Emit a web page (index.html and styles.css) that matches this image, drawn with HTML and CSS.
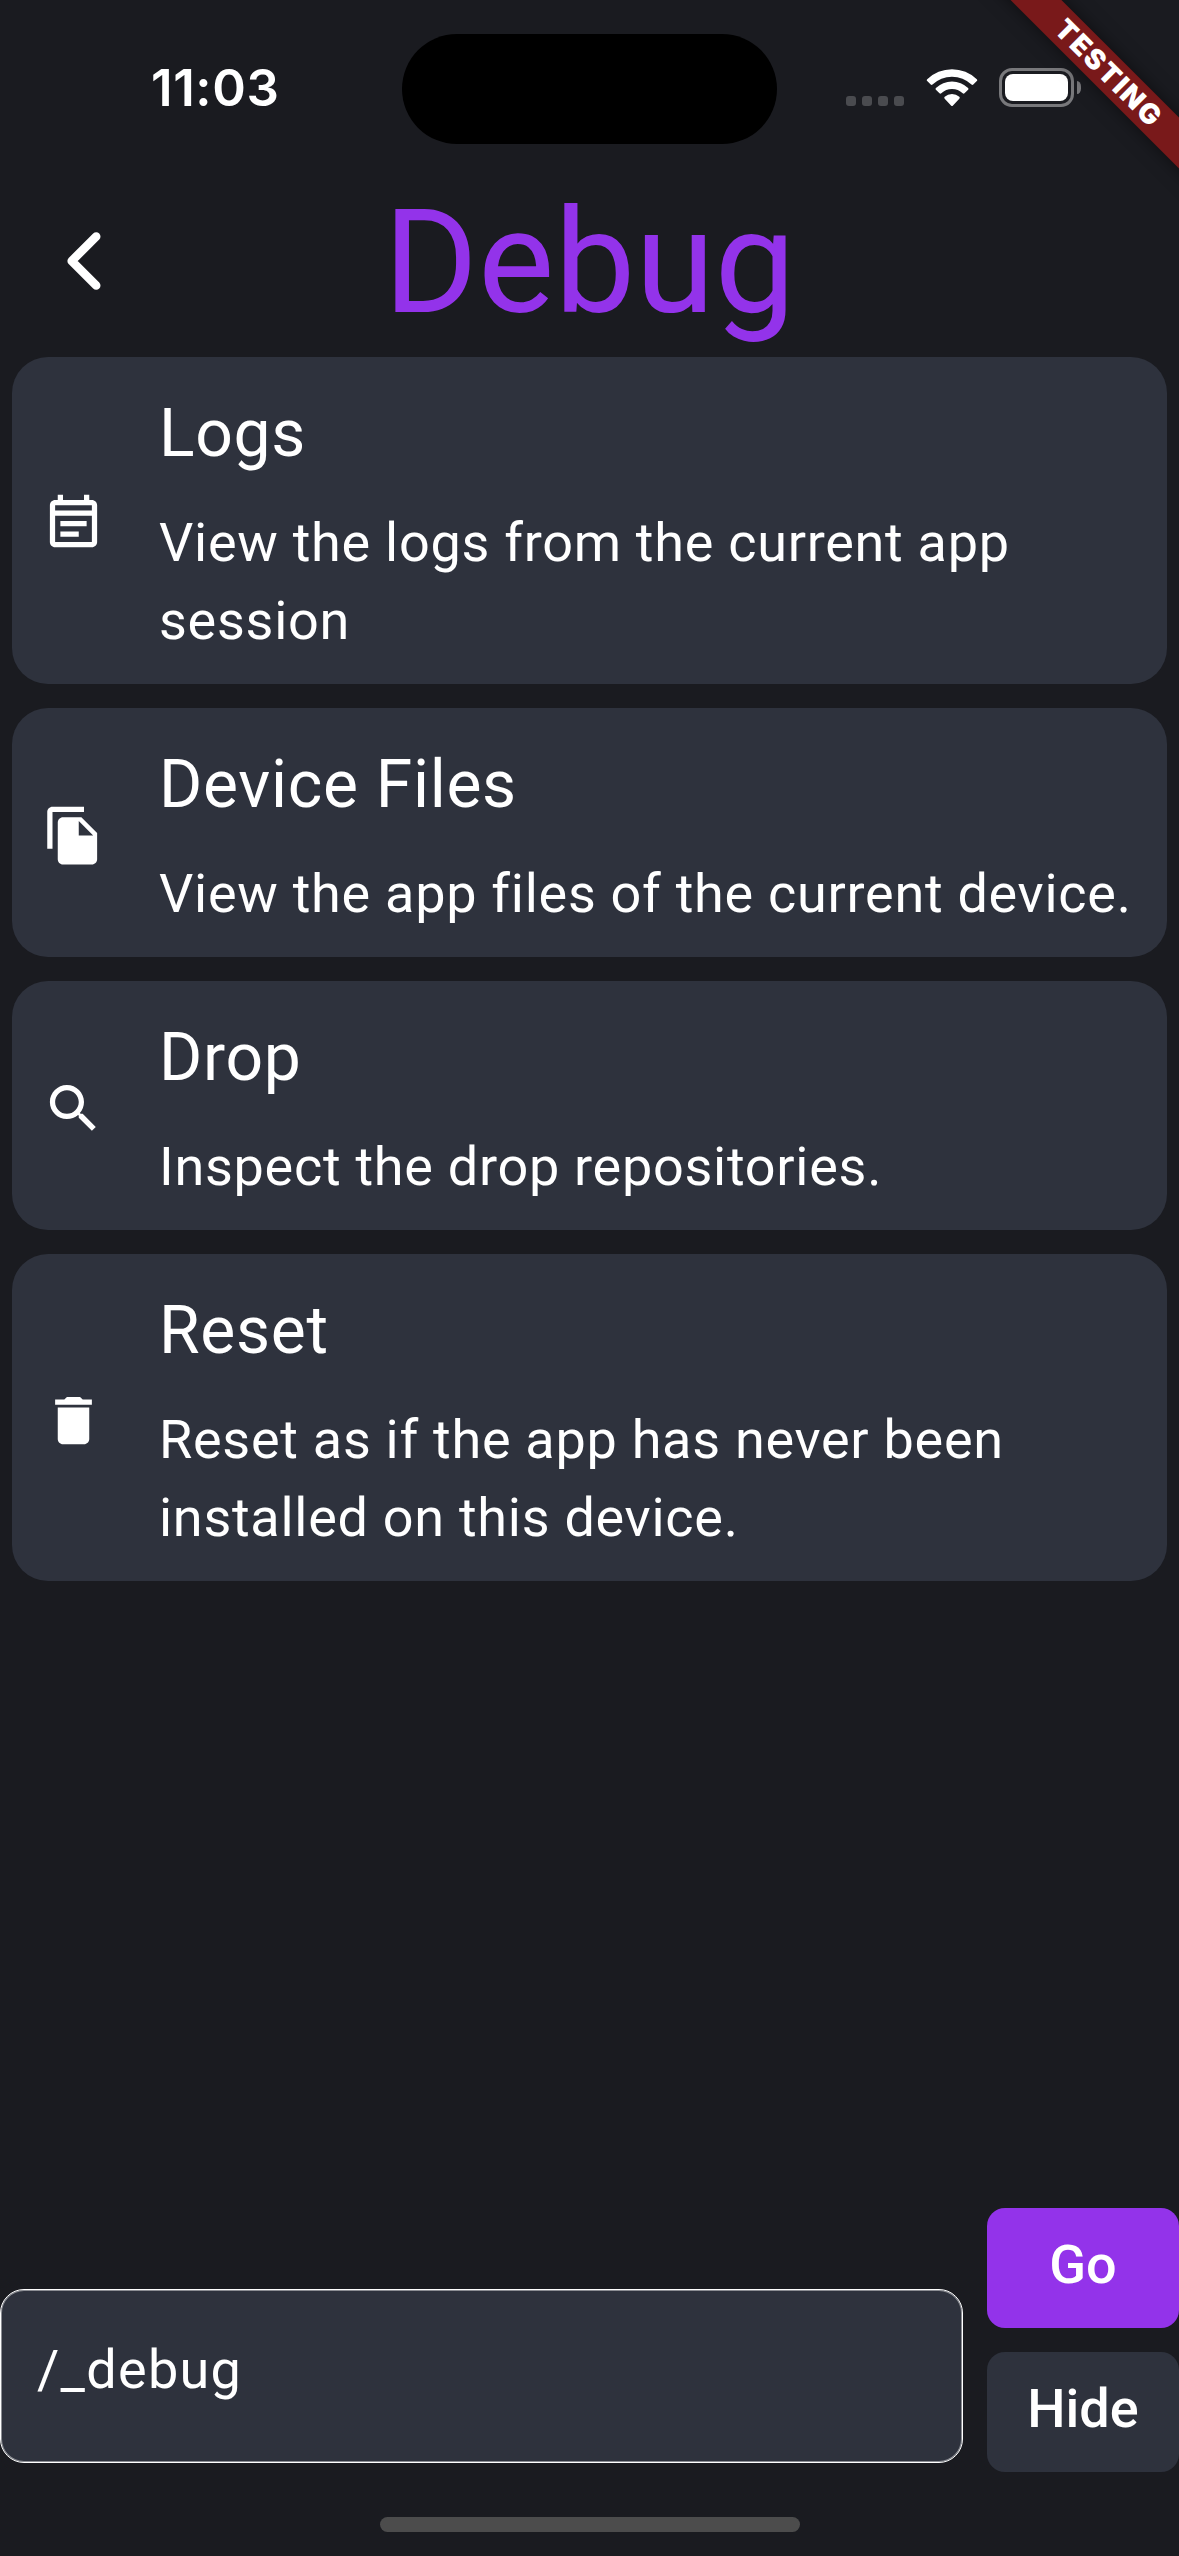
FILE: index.html
```html
<!DOCTYPE html>
<html lang="en">
<head>
<meta charset="utf-8">
<title>Debug</title>
<link rel="stylesheet" href="styles.css">
</head>
<body>
<div class="screen">
  <header class="status">
    <div class="time">11:03</div>
    <div class="island"></div>
    <div class="indicators">
      <div class="dots"><i></i><i></i><i></i><i></i></div>
      <svg class="wifi" width="52" height="38" viewBox="0 0 52 38">
        <path d="M1.2 10.3A35.5 35.5 0 0 1 50.800 10.3a1.300 1.300 0 0 1 0 1.800L47.300 15.600a1.300 1.300 0 0 1-1.800 0A28 28 0 0 0 6.500 15.600a1.300 1.300 0 0 1-1.800 0L1.200 12.100a1.300 1.300 0 0 1 0-1.800z"/>
        <path d="M9.900 19A23 23 0 0 1 42.100 19a1.300 1.300 0 0 1 0 1.800L38.500 24.300a1.300 1.300 0 0 1-1.800 0A15.400 15.400 0 0 0 15.300 24.300a1.300 1.300 0 0 1-1.800 0L9.900 20.800a1.300 1.300 0 0 1 0-1.800z"/>
        <path d="M18.700 27.800A10.800 10.800 0 0 1 33.300 27.800a1.300 1.300 0 0 1 0 1.900L27 36.400a1.400 1.400 0 0 1-2 0L18.700 29.700a1.300 1.300 0 0 1 0-1.900z"/>
      </svg>
      <div class="battery"><div class="cell"><div class="charge"></div></div><div class="nub"></div></div>
    </div>
  </header>

  <div class="titlebar">
    <svg class="back" width="40" height="64" viewBox="0 0 40 64"><path d="M32.200 7.500 7.700 32 32.200 56.500"/></svg>
    <h1 class="title">Debug</h1>
  </div>

  <main class="list">
    <section class="card">
      <svg class="icon" viewBox="0 0 24 24"><path d="M19 3h-1V1h-2v2H8V1H6v2H5c-1.110 0-1.990.9-1.990 2L3 19c0 1.100.890 2 2 2h14c1.100 0 2-.9 2-2V5c0-1.100-.9-2-2-2zm0 16H5V9h14v10zm0-12H5V5h14v2zM7 11h10v2H7v-2zm0 4h7v2H7z"/></svg>
      <div class="text"><h2>Logs</h2><p>View the logs from the current app session</p></div>
    </section>
    <section class="card">
      <svg class="icon" viewBox="0 0 24 24"><path d="M16 1H4c-1.100 0-2 .9-2 2v14h2V3h12V1zm-1 4l6 6v10c0 1.100-.9 2-2 2H7.990C6.890 23 6 22.100 6 21l.010-14c0-1.100.890-2 1.990-2h7zm-1 7h5.500L14 6.500V12z"/></svg>
      <div class="text"><h2>Device Files</h2><p>View the app files of the current device.</p></div>
    </section>
    <section class="card">
      <svg class="icon" viewBox="0 0 24 24"><path d="M15.500 14h-.79l-.28-.27C15.410 12.590 16 11.110 16 9.500 16 5.910 13.090 3 9.500 3S3 5.910 3 9.500 5.910 16 9.500 16c1.610 0 3.090-.59 4.230-1.570l.27.28v.79l5 4.990L20.490 19l-4.990-5zm-6 0C7.010 14 5 11.990 5 9.500S7.010 5 9.500 5 14 7.010 14 9.500 11.990 14 9.500 14z"/></svg>
      <div class="text"><h2>Drop</h2><p>Inspect the drop repositories.</p></div>
    </section>
    <section class="card">
      <svg class="icon" viewBox="0 0 24 24"><path d="M6 19c0 1.100.9 2 2 2h8c1.100 0 2-.9 2-2V7H6v12zM19 4h-3.500l-1-1h-5l-1 1H5v2h14V4z"/></svg>
      <div class="text"><h2>Reset</h2><p>Reset as if the app has never been installed on this device.</p></div>
    </section>
  </main>

  <footer class="route">
    <div class="field">/_debug</div>
    <div class="actions">
      <button class="btn go">Go</button>
      <button class="btn hide">Hide</button>
    </div>
  </footer>
  <div class="home"></div>
  <div class="banner"><span>TESTING</span></div>
</div>
</body>
</html>
```
FILE: styles.css
```css
* { box-sizing: border-box; }
body { margin: 0; background: #1a1b20; color: #fff; font-family: Roboto, sans-serif; }
h1, h2, p { margin: 0; font-weight: 400; }

.screen {
  position: relative;
  display: flex;
  flex-direction: column;
  width: 1179px;
  height: 2556px;
  overflow: hidden;
}

.status {
  display: grid;
  grid-template-columns: 402px 375px 402px;
  height: 177px;
  padding-top: 34px;
}
.time {
  padding: 24px 0 0 151px;
  font: 600 51px/60px Inter, sans-serif;
  letter-spacing: .6px;
}
.island { height: 110px; border-radius: 55px; background: #000; }
.indicators { display: flex; align-items: flex-start; padding: 34px 0 0 69px; }
.dots { display: flex; gap: 6px; padding-top: 28px; }
.dots i { width: 10px; height: 10px; border-radius: 3px; background: #4a4b4f; }
.wifi { margin: 1px 0 0 22px; fill: #fff; }
.battery { display: flex; align-items: center; gap: 3px; margin-left: 21px; }
.cell { width: 75px; height: 39px; padding: 3px; border: 3px solid #78787b; border-radius: 13px; }
.charge { height: 27px; border-radius: 8px; background: #fff; }
.nub { width: 4px; height: 13px; border-radius: 0 5px 5px 0 / 0 6.5px 6.5px 0; background: #78787b; }

.titlebar {
  display: grid;
  grid-template-columns: 180px 1fr 180px;
  align-items: center;
  height: 168px;
  margin-bottom: 12px;
}
.back { margin: -2px 0 0 64px; fill: none; stroke: #fff; stroke-width: 8.6; stroke-linecap: round; stroke-linejoin: round; }
.title { padding-top: 2px; color: #9333ea; font-size: 144px; line-height: 168px; text-align: center; }

.list { display: flex; flex-direction: column; gap: 24px; padding: 0 12px; }
.card {
  display: flex;
  align-items: center;
  gap: 54px;
  padding: 35px 30px 24px;
  border-radius: 36px;
  background: #2e323d;
}
.icon { flex: none; width: 63px; height: 63px; margin-top: -5px; fill: #fff; }
.text { flex: 1; }
.card p { margin-right: -20px; }
h2 { margin-bottom: 28px; font-size: 66px; line-height: 84px; letter-spacing: .7px; }
p { font-size: 54px; line-height: 78px; letter-spacing: .72px; }

.route { display: flex; align-items: center; gap: 24px; margin-top: auto; }
.field {
  flex: 1;
  height: 174px;
  margin-top: 72px;
  padding: 41px 36px;
  border: 1px solid #fff;
  border-radius: 24px;
  background: #2e323d;
  box-shadow: inset 0 0 0 1px rgba(255, 255, 255, .45);
  font-size: 54px;
  line-height: 78px;
  letter-spacing: 1.3px;
}
.actions { display: flex; flex-direction: column; gap: 24px; width: 192px; }
.btn {
  height: 120px;
  padding: 0 0 6px;
  border: 0;
  border-radius: 18px;
  color: #fff;
  background: #2e323d;
  font: 500 54px/80px Roboto, sans-serif;
}
.go { background: #9333ea; }
.home { width: 420px; height: 15px; margin: 45px auto 24px; border-radius: 8px; background: #4c4c4c; }

.banner {
  position: absolute;
  left: 957px;
  top: 53px;
  width: 300px;
  height: 36px;
  padding-left: 6px;
  transform: rotate(45deg);
  background: #79191a;
  box-shadow: 0 0 18px rgba(0, 0, 0, .5);
  text-align: center;
  font: 900 28px/36px Inter, sans-serif;
  letter-spacing: 2px;
}
```
